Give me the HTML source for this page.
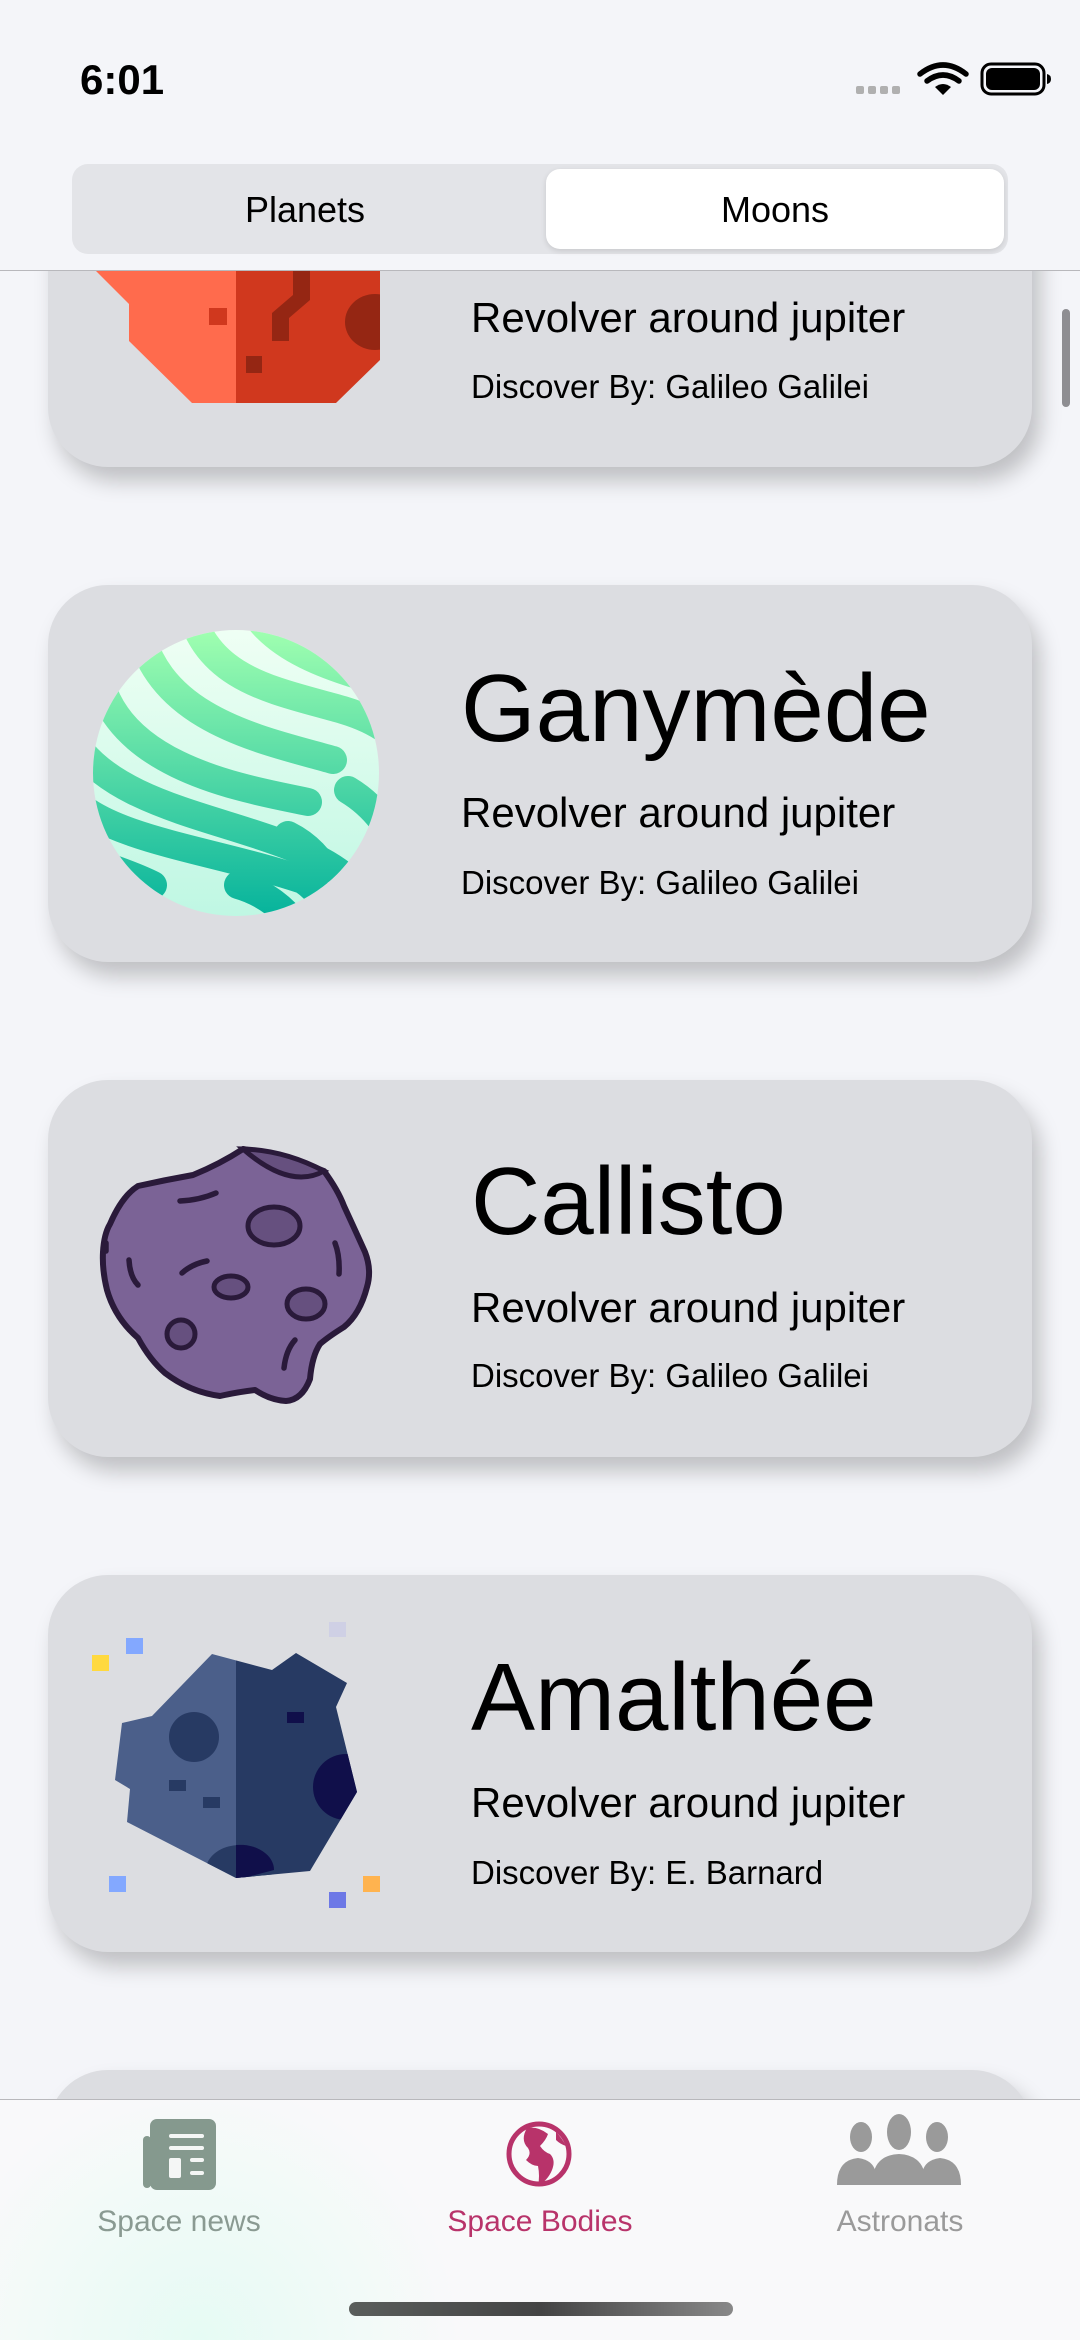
<!DOCTYPE html>
<html><head><meta charset="utf-8"><style>
*{margin:0;padding:0;box-sizing:border-box}
html,body{width:1080px;height:2340px;overflow:hidden}
body{background:#f4f5f9;position:relative;font-family:"Liberation Sans",sans-serif;color:#000}
.card{position:absolute;left:48px;width:984px;height:377px;background:#dcdde1;border-radius:60px;box-shadow:8px 14px 22px rgba(0,0,0,0.22)}
.t{position:absolute;white-space:nowrap}
.title{font-size:96px;line-height:1;}
.sub{font-size:42px;line-height:1}
.disc{font-size:33px;line-height:1}
.header{position:absolute;left:0;top:0;width:1080px;height:271px;background:#f4f5f9;border-bottom:1.5px solid #b8b8bc;z-index:5}
.seg{position:absolute;left:72px;top:164px;width:936px;height:90px;background:#e3e4e8;border-radius:16px}
.segsel{position:absolute;left:546px;top:169px;width:458px;height:80px;background:#fff;border-radius:14px;box-shadow:0 2px 6px rgba(0,0,0,0.12)}
.segt{position:absolute;top:189px;font-size:36px;width:300px;text-align:center}
.tab{position:absolute;left:0;top:2099px;width:1080px;height:241px;border-top:1.5px solid #b8b8bc;background:radial-gradient(ellipse 260px 260px at 200px 240px,#e6fbf4,rgba(250,250,250,0) 100%),#f9f9fa;z-index:6}
.tl{position:absolute;top:2205px;font-size:30px;width:300px;text-align:center}
</style></head><body>

<div class="header">
 <div class="t" style="left:80px;top:56px;font-size:42px;font-weight:bold">6:01</div>
 <svg style="position:absolute;left:850px;top:60px" width="210" height="40" viewBox="0 0 210 40">
  <g fill="#b0b0b0"><rect x="6" y="26" width="8" height="8" rx="2"/><rect x="18" y="26" width="8" height="8" rx="2"/><rect x="30" y="26" width="8" height="8" rx="2"/><rect x="42" y="26" width="8" height="8" rx="2"/></g>
  <g fill="none" stroke="#000" stroke-width="5.5" stroke-linecap="round">
   <path d="M70 14 Q93 -4 116 14"/><path d="M77 21 Q93 9 109 21"/></g>
  <path d="M85 27 Q93 21 101 27 L93 35 Z" fill="#000"/>
  <rect x="132" y="4" width="62" height="30" rx="9" fill="none" stroke="#000" stroke-width="3"/>
  <rect x="136" y="8" width="54" height="22" rx="6" fill="#000"/>
  <path d="M197 14 v10 q4 -1 4 -5 q0 -4 -4 -5z" fill="#000"/>
 </svg>
 <div class="seg"></div>
 <div class="segsel"></div>
 <div class="segt" style="left:155px">Planets</div>
 <div class="segt" style="left:625px">Moons</div>
</div>

<!-- card 1 partial -->
<div class="card" style="top:90px"></div>
<svg style="position:absolute;left:0;top:0" width="400" height="420">
 <path d="M96 240 L96 271 L129 304 L129 341 L192 403 L236 403 L236 240 Z" fill="#ff6b4d"/>
 <path d="M236 240 L380 240 L380 360 L336 403 L236 403 Z" fill="#d0381e"/>
 <rect x="209" y="308" width="18" height="17" fill="#d0381e"/>
 <rect x="246" y="356" width="16" height="17" fill="#952613"/>
 <path d="M293 250 L310 250 L310 300 L289 318 L289 341 L272 341 L272 313 L293 295 Z" fill="#952613"/>
 <clipPath id="c1"><rect x="236" y="240" width="144" height="200"/></clipPath>
 <ellipse cx="375" cy="322" rx="30" ry="28" fill="#952613" clip-path="url(#c1)"/>
</svg>
<div class="t sub" style="left:471px;top:297px">Revolver around jupiter</div>
<div class="t disc" style="left:471px;top:370px">Discover By: Galileo Galilei</div>

<!-- card 2 -->
<div class="card" style="top:585px"></div>
<svg style="position:absolute;left:93px;top:630px" width="286" height="286" viewBox="0 0 286 286">
 <defs>
  <linearGradient id="gs" x1="0" y1="0" x2="0" y2="286" gradientUnits="userSpaceOnUse"><stop offset="0" stop-color="#a0ffb0"/><stop offset="1" stop-color="#06b39c"/></linearGradient>
  <linearGradient id="gb" x1="0" y1="0" x2="0" y2="1"><stop offset="0" stop-color="#effff4"/><stop offset="1" stop-color="#bff7e3"/></linearGradient>
  <clipPath id="cc"><circle cx="143" cy="143" r="143"/></clipPath>
 </defs>
 <circle cx="143" cy="143" r="143" fill="url(#gb)"/>
 <g clip-path="url(#cc)" fill="none" stroke="url(#gs)" stroke-width="28" stroke-linecap="round">
  <path d="M150 -40 C170 20 240 40 320 60"/>
  <path d="M95 -30 C110 50 180 60 250 80 C290 92 310 110 320 130"/>
  <path d="M45 -10 C60 90 170 110 240 130"/>
  <path d="M255 160 C280 175 300 200 310 230"/>
  <path d="M5 40 C20 140 160 160 215 172"/>
  <path d="M-20 110 C30 190 180 190 250 245 C265 260 275 280 280 300"/>
  <path d="M-20 170 C20 210 120 220 210 250 C225 260 240 280 245 300"/>
  <path d="M-20 225 C10 235 40 245 60 255"/>
  <path d="M145 255 C170 262 195 280 205 300"/>
  <path d="M195 205 C215 215 228 230 235 245"/>
 </g>
</svg>
<div class="t title" style="left:461px;top:661px">Ganymède</div>
<div class="t sub" style="left:461px;top:792px">Revolver around jupiter</div>
<div class="t disc" style="left:461px;top:866px">Discover By: Galileo Galilei</div>

<!-- card 3 -->
<div class="card" style="top:1080px"></div>
<svg style="position:absolute;left:0;top:1100px" width="400" height="320" viewBox="0 1100 400 320">
 <path d="M243 1149 Q290 1158 324 1171 Q338 1190 344 1206 Q356 1232 365 1252 Q372 1270 367 1287 Q360 1314 344 1327 Q328 1337 320 1344 Q312 1356 310 1379 Q302 1400 286 1401 Q270 1400 255 1390 Q238 1392 220 1396 Q190 1392 165 1373 Q150 1360 138 1338 Q115 1318 107 1290 Q102 1270 103 1252 Q104 1234 110 1224 Q122 1196 138 1186 Q165 1180 193 1175 Q220 1164 243 1149 Z" fill="#7b6396" stroke="#2a1a3a" stroke-width="6" stroke-linejoin="round"/>
 <path d="M243 1149 Q284 1150 324 1171 Q290 1190 243 1149 Z" fill="#66507f" stroke="#2a1a3a" stroke-width="5"/>
 <g fill="#66507f" stroke="#2a1a3a" stroke-width="5">
  <ellipse cx="274" cy="1226" rx="26" ry="19"/>
  <ellipse cx="231" cy="1287" rx="17" ry="11"/>
  <ellipse cx="306" cy="1304" rx="19" ry="15"/>
  <ellipse cx="181" cy="1334" rx="14" ry="14"/>
 </g>
 <g fill="none" stroke="#2a1a3a" stroke-width="5.5" stroke-linecap="round">
  <path d="M180 1201 Q200 1200 216 1193"/>
  <path d="M182 1273 Q192 1264 207 1261"/>
  <path d="M129 1260 Q130 1277 138 1285"/>
  <path d="M335 1243 Q340 1256 339 1274"/>
  <path d="M295 1340 Q286 1350 284 1368"/>
  <path d="M106 1243 L106 1251"/>
 </g>
</svg>
<div class="t title" style="left:471px;top:1154px">Callisto</div>
<div class="t sub" style="left:471px;top:1287px">Revolver around jupiter</div>
<div class="t disc" style="left:471px;top:1359px">Discover By: Galileo Galilei</div>

<!-- card 4 -->
<div class="card" style="top:1575px"></div>
<svg style="position:absolute;left:0;top:1600px" width="400" height="320" viewBox="0 1600 400 320">
 <clipPath id="ca"><path d="M212 1654 L272 1670 L296 1653 L347 1683 L336 1707 L357 1792 L310 1871 L236 1878 L127 1822 L130 1789 L115 1780 L122 1723 L152 1716 Z"/></clipPath>
 <g clip-path="url(#ca)">
  <rect x="100" y="1640" width="136" height="260" fill="#4b5f8a"/>
  <rect x="236" y="1640" width="140" height="260" fill="#273a63"/>
  <ellipse cx="194" cy="1737" rx="25" ry="25" fill="#273a63"/>
  <circle cx="346" cy="1787" r="33" fill="#100f4a"/>
  <ellipse cx="240" cy="1870" rx="34" ry="25" fill="#273a63"/>
  <path d="M236 1845 A34 25 0 0 1 274 1870 L236 1880 Z" fill="#100f4a"/>
 </g>
 <rect x="169" y="1780" width="17" height="11" fill="#273a63"/>
 <rect x="203" y="1797" width="17" height="11" fill="#273a63"/>
 <rect x="287" y="1712" width="17" height="11" fill="#100f4a"/>
 <rect x="92" y="1655" width="17" height="16" fill="#ffd93f"/>
 <rect x="126" y="1638" width="17" height="16" fill="#83a8ff"/>
 <rect x="329" y="1622" width="17" height="15" fill="#cfd0e5"/>
 <rect x="109" y="1876" width="17" height="16" fill="#83a8ff"/>
 <rect x="329" y="1892" width="17" height="16" fill="#6d78e6"/>
 <rect x="363" y="1876" width="17" height="16" fill="#ffb34f"/>
</svg>
<div class="t title" style="left:471px;top:1650px">Amalthée</div>
<div class="t sub" style="left:471px;top:1782px">Revolver around jupiter</div>
<div class="t disc" style="left:471px;top:1856px">Discover By: E. Barnard</div>

<!-- card 5 -->
<div class="card" style="top:2070px;height:200px"></div>

<!-- scrollbar -->
<div style="position:absolute;left:1062px;top:309px;width:8px;height:98px;border-radius:4px;background:#8e8e92"></div>

<!-- tab bar -->
<div class="tab"></div>
<svg style="position:absolute;left:0;top:2100px;z-index:7" width="1080" height="110">
 <g fill="#85998e">
  <rect x="150" y="19" width="66" height="71" rx="7"/>
  <rect x="143" y="36" width="8" height="52" rx="4"/>
 </g>
 <g fill="#f4f6f5">
  <rect x="169" y="34" width="35" height="4" rx="2"/>
  <rect x="169" y="46" width="35" height="4" rx="2"/>
  <rect x="169" y="58" width="12" height="20" rx="2"/>
  <rect x="190" y="58" width="14" height="4" rx="2"/>
  <rect x="190" y="71" width="14" height="4" rx="2"/>
 </g>
 <circle cx="539" cy="54" r="30" fill="none" stroke="#b8336a" stroke-width="5"/>
 <path d="M527 28 Q520 40 528 48 Q532 54 526 60 Q532 66 538 66 Q540 76 538 86 Q548 80 552 70 Q556 60 550 54 Q544 52 540 46 Q546 40 548 34 Q538 26 527 28 Z M556 32 Q562 38 566 46 Q560 44 556 40 Z" fill="#b8336a"/>
 <g fill="#9a9a9a">
  <ellipse cx="861" cy="37" rx="11" ry="15"/>
  <ellipse cx="899" cy="32" rx="12" ry="18"/>
  <ellipse cx="937" cy="37" rx="11" ry="15"/>
  <path d="M837 85 Q837 60 858 58 Q872 60 875 70 L875 85 Z"/>
  <path d="M961 85 Q961 60 940 58 Q926 60 923 70 L923 85 Z"/>
  <path d="M872 85 Q872 55 899 54 Q926 55 926 85 Z"/>
 </g>
</svg>
<div class="tl" style="left:29px;color:#8a9a92;z-index:7">Space news</div>
<div class="tl" style="left:390px;color:#b8336a;z-index:7">Space Bodies</div>
<div class="tl" style="left:750px;color:#9a9a9a;z-index:7">Astronats</div>
<div style="position:absolute;left:349px;top:2302px;width:384px;height:14px;border-radius:7px;background:linear-gradient(90deg,#5a5e5c,#444,#888);z-index:7"></div>
</body></html>
